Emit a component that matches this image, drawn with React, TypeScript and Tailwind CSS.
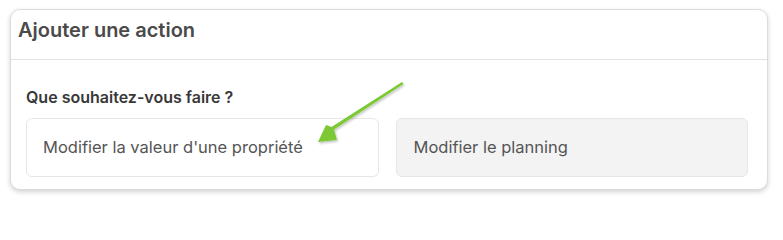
export default function App() {
  return (
    <div className="min-h-screen bg-white pl-[10px] pr-[15px] pt-[9px]" style={{ fontFamily: 'Inter, "Noto Sans", sans-serif' }}>
      <div className="relative rounded-[10px] border border-[#dcdcdc] bg-white shadow-[0_2px_5px_rgba(0,0,0,0.18)]">
        {/* Header */}
        <div className="h-[50px] border-b border-[#e2e2e2] pl-[7px] pt-[8px]">
          <h2 className="text-[20px] font-semibold leading-[24px] text-[#4a4a4a]">Ajouter une action</h2>
        </div>

        {/* Body */}
        <div className="pl-[15px] pr-[19px] pt-[27px] pb-[12px]">
          <p className="mb-[11px] text-[16px] font-semibold leading-[20px] text-[#383838]">Que souhaitez-vous faire ?</p>
          <div className="grid grid-cols-2 gap-[17px]">
            <button className="h-[59px] rounded-[6px] border border-[#e6e6e6] bg-white pl-[16px] text-left text-[16.5px] text-[#555555]">
              Modifier la valeur d'une propriété
            </button>
            <button className="h-[59px] rounded-[6px] border border-[#e6e6e6] bg-[#f3f3f3] pl-[17px] text-left text-[16.5px] text-[#555555]">
              Modifier le planning
            </button>
          </div>
        </div>

        {/* Annotation arrow */}
        <svg className="pointer-events-none absolute left-0 top-0" width="783" height="203" viewBox="0 0 783 203">
          <defs>
            <filter id="sh" x="-20%" y="-20%" width="140%" height="140%">
              <feDropShadow dx="1" dy="1.5" stdDeviation="1.2" floodColor="#000" floodOpacity="0.25" />
            </filter>
          </defs>
          <g filter="url(#sh)" transform="translate(-11,-10)">
            <path d="M402 82 L403.5 84 L334 129.5 L337 140 L318 142 L326 125 L331.5 127 Z" fill="#7cc934" />
          </g>
        </svg>
      </div>
    </div>
  );
}
